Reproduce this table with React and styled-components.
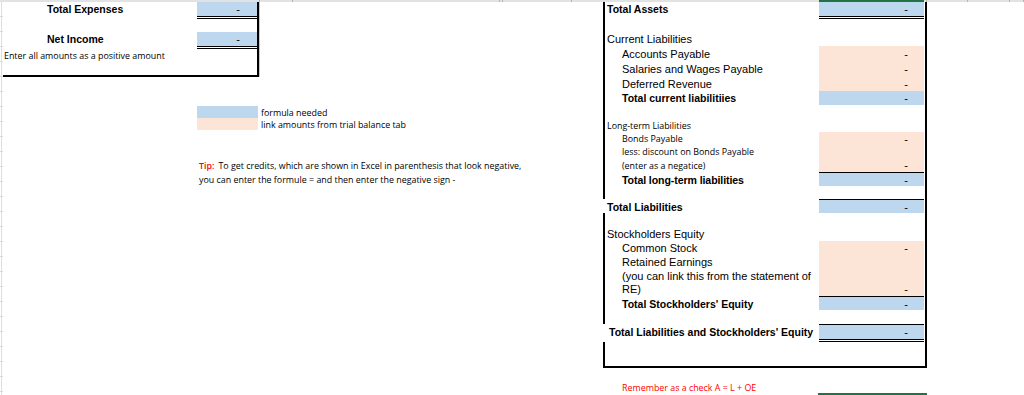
import React from 'react';
import styled, { createGlobalStyle } from 'styled-components';

const GlobalStyle = createGlobalStyle`
  html, body {
    margin: 0;
    padding: 0;
    background: #fff;
  }
  body {
    width: 1024px;
    height: 395px;
    overflow: hidden;
    font-family: "Liberation Sans", Arial, sans-serif;
    color: #000;
  }
`;

const BLUE = '#bdd7ee';
const PEACH = '#fce4d6';
const SMALL = '"Open Sans", "Liberation Sans", sans-serif';
const SMALL_SIZE = '8.9px';

const Page = styled.div`
  width: 1024px;
  height: 395px;
  display: flex;
  flex-direction: column;
  overflow: hidden;
`;

const TopStrip = styled.div`
  display: flex;
  height: 2px;
  flex: none;
  background: #e2e2e2;
`;

const StripSeg = styled.div`
  width: ${({ $w }) => $w}px;
  flex: none;
  border-right: 1px solid #b4b4b4;
  box-sizing: border-box;
`;

const Body = styled.div`
  flex: 1;
  display: flex;
`;

const Gutter = styled.div`
  width: 3px;
  flex: none;
  background:
    linear-gradient(to right, transparent 1px, #dedede 1px, #dedede 2px, transparent 2px),
    repeating-linear-gradient(to bottom, transparent 0, transparent 14px, #d8d8d8 14px, #d8d8d8 15px);
`;

const LeftSection = styled.div`
  width: 600px;
  flex: none;
  display: flex;
  flex-direction: column;
`;

const SummaryBox = styled.div`
  width: 256px;
  box-sizing: border-box;
  border-right: 2px solid #000;
  border-bottom: 2px solid #000;
  box-shadow: 1px 0 0 #c8c8c8;
`;

const SumRow = styled.div`
  display: flex;
  height: ${({ $h }) => $h}px;
`;

const SumLabel = styled.div`
  width: 194px;
  box-sizing: border-box;
  padding-left: ${({ $pad }) => $pad}px;
  padding-bottom: ${({ $pb }) => $pb || 0}px;
  display: flex;
  align-items: center;
  font-size: ${({ $small }) => ($small ? SMALL_SIZE : '10.5px')};
  font-weight: ${({ $small }) => ($small ? 400 : 700)};
  font-family: ${({ $small }) => ($small ? SMALL : 'inherit')};
  white-space: nowrap;
`;

const Value = styled.div`
  width: ${({ $w }) => $w}px;
  flex: none;
  box-sizing: border-box;
  background: ${({ $fill }) => ($fill === 'blue' ? BLUE : $fill === 'peach' ? PEACH : 'transparent')};
  background-clip: padding-box;
  border-top: ${({ $top }) => ($top ? '1px solid #000' : 'none')};
  border-bottom: ${({ $double }) => ($double ? '3px double #000' : 'none')};
  display: flex;
  align-items: center;
  justify-content: flex-end;
  padding-right: ${({ $pr }) => $pr}px;
  font-size: 11px;
  ${({ $selected }) => $selected && 'box-shadow: 0 -2px 0 #217346;'}
`;

const Legend = styled.div`
  margin: 29px 0 0 194px;
  display: flex;
  flex-direction: column;
`;

const LegendRow = styled.div`
  display: flex;
  align-items: center;
  height: 12px;
`;

const Swatch = styled.div`
  width: 61px;
  height: 100%;
  background: ${({ $fill }) => $fill};
`;

const SmallText = styled.span`
  font-family: ${SMALL};
  font-size: ${SMALL_SIZE};
  color: ${({ $red }) => ($red ? '#ff0000' : '#000')};
  white-space: nowrap;
`;

const LegendText = styled(SmallText)`
  margin-left: 3px;
`;

const Tip = styled.div`
  margin: 29px 0 0 196px;
  font-family: ${SMALL};
  font-size: ${SMALL_SIZE};
  line-height: 14px;
  white-space: nowrap;
`;

const TipLabel = styled.span`
  color: #ff0000;
  font-weight: 600;
  margin-right: 4px;
`;

const RightColumn = styled.div`
  width: 324px;
  flex: none;
  display: flex;
  flex-direction: column;
`;

const SheetBox = styled.div`
  display: flex;
  flex-direction: column;
  border-bottom: 2px solid #000;
  border-right: 2px solid #000;
`;

const Row = styled.div`
  display: flex;
  height: ${({ $h }) => $h}px;
  box-sizing: border-box;
  border-left: 2px solid ${({ $bleed }) => ($bleed ? 'transparent' : '#000')};
`;

const labelFont = {
  bold: 'font-weight: 700; font-size: 10.5px;',
  big: 'font-weight: 700; font-size: 10.6px; letter-spacing: -0.1px;',
  small: `font-family: ${SMALL}; font-size: ${SMALL_SIZE};`,
  regular: 'font-size: 11px;',
};

const Label = styled.div`
  width: 214px;
  flex: none;
  box-sizing: border-box;
  display: flex;
  align-items: center;
  padding-left: ${({ $indent }) => $indent}px;
  padding-top: ${({ $pt }) => $pt || 0}px;
  padding-bottom: ${({ $pb }) => $pb || 0}px;
  white-space: nowrap;
  ${({ $kind }) => labelFont[$kind || 'regular']}
`;

const Footer = styled.div`
  display: grid;
  grid-template-columns: 215px 109px;
  height: 27px;
`;

const CheckText = styled(SmallText)`
  padding: 14px 0 0 19px;
  line-height: 12px;
`;

const CheckCell = styled.div`
  margin-top: 25px;
  border-top: 2px solid #217346;
`;

const strip = [260, 33, 207, 3, 69, 355, 41, 42, 14];

const rows = [
  { label: 'Total Assets', h: 17, kind: 'bold', fill: 'blue', double: true, dash: true, selected: true },
  { h: 12 },
  { label: 'Current Liabilities', h: 15 },
  { label: 'Accounts Payable', h: 15, indent: 17, fill: 'peach', dash: true },
  { label: 'Salaries and Wages Payable', h: 15, indent: 17, fill: 'peach', dash: true },
  { label: 'Deferred Revenue', h: 15, indent: 17, fill: 'peach', dash: true },
  { label: 'Total current liabilitiies', h: 14, indent: 17, kind: 'bold', fill: 'blue', dash: true },
  { h: 14 },
  { label: 'Long-term Liabilities', h: 13, kind: 'small' },
  { label: 'Bonds Payable', h: 13, indent: 17, kind: 'small', fill: 'peach', dash: true },
  { label: 'less: discount on Bonds Payable', h: 13, indent: 17, kind: 'small', fill: 'peach' },
  { label: '(enter as a negatice)', h: 14, indent: 17, kind: 'small', fill: 'peach', dash: true },
  { label: 'Total long-term liabilities', h: 14, indent: 17, kind: 'big', fill: 'blue', top: true, dash: true },
  { h: 13 },
  { label: 'Total Liabilities', h: 14, kind: 'bold', fill: 'blue', top: true, dash: true, bleed: true },
  { h: 14 },
  { label: 'Stockholders Equity', h: 14 },
  { label: 'Common Stock', h: 14, indent: 17, fill: 'peach', dash: true },
  { label: 'Retained Earnings', h: 14, indent: 17, fill: 'peach' },
  { label: '(you can link this from the statement of', h: 13, indent: 17, fill: 'peach' },
  { label: 'RE)', h: 14, indent: 17, fill: 'peach', dash: true },
  { label: "Total Stockholders' Equity", h: 14, indent: 17, kind: 'bold', fill: 'blue', top: true, dash: true },
  { h: 14 },
  { label: "Total Liabilities and Stockholders' Equity", h: 18, indent: 4, kind: 'bold', fill: 'blue', top: true, double: true, dash: true, bleed: true },
  { h: 24 },
];

const App = () => (
  <Page>
    <GlobalStyle />
    <TopStrip>
      {strip.map((w, i) => <StripSeg key={i} $w={w} />)}
    </TopStrip>
    <Body>
      <Gutter />
      <LeftSection>
        <SummaryBox>
          <SumRow $h={17}>
            <SumLabel $pad={44} $pb={3}>Total Expenses</SumLabel>
            <Value $w={60} $pr={17} $fill="blue" $double>-</Value>
          </SumRow>
          <SumRow $h={13} />
          <SumRow $h={17}>
            <SumLabel $pad={44} $pb={3}>Net Income</SumLabel>
            <Value $w={60} $pr={17} $fill="blue" $double>-</Value>
          </SumRow>
          <SumRow $h={13}>
            <SumLabel $pad={1} $small>Enter all amounts as a positive amount</SumLabel>
          </SumRow>
          <SumRow $h={13} />
        </SummaryBox>
        <Legend>
          <LegendRow>
            <Swatch $fill={BLUE} />
            <LegendText>formula needed</LegendText>
          </LegendRow>
          <LegendRow>
            <Swatch $fill={PEACH} />
            <LegendText>link amounts from trial balance tab</LegendText>
          </LegendRow>
        </Legend>
        <Tip>
          <div>
            <TipLabel>Tip:</TipLabel>To get credits, which are shown in Excel in parenthesis that look negative,
          </div>
          <div>you can enter the formule = and then enter the negative sign -</div>
        </Tip>
      </LeftSection>
      <RightColumn>
        <SheetBox>
          {rows.map((r, i) => (
            <Row key={i} $h={r.h} $bleed={r.bleed}>
              <Label
                $indent={r.indent ?? 2}
                $kind={r.kind}
                $pt={r.top ? 1 : 0}
                $pb={r.double ? 3 : 0}
              >
                {r.label}
              </Label>
              <Value
                $w={105}
                $pr={16}
                $fill={r.fill}
                $top={r.top}
                $double={r.double}
                $selected={r.selected}
              >
                {r.dash ? '-' : ''}
              </Value>
            </Row>
          ))}
        </SheetBox>
        <Footer>
          <CheckText $red>Remember as a check A = L + OE</CheckText>
          <CheckCell />
        </Footer>
      </RightColumn>
    </Body>
  </Page>
);

export default App;
